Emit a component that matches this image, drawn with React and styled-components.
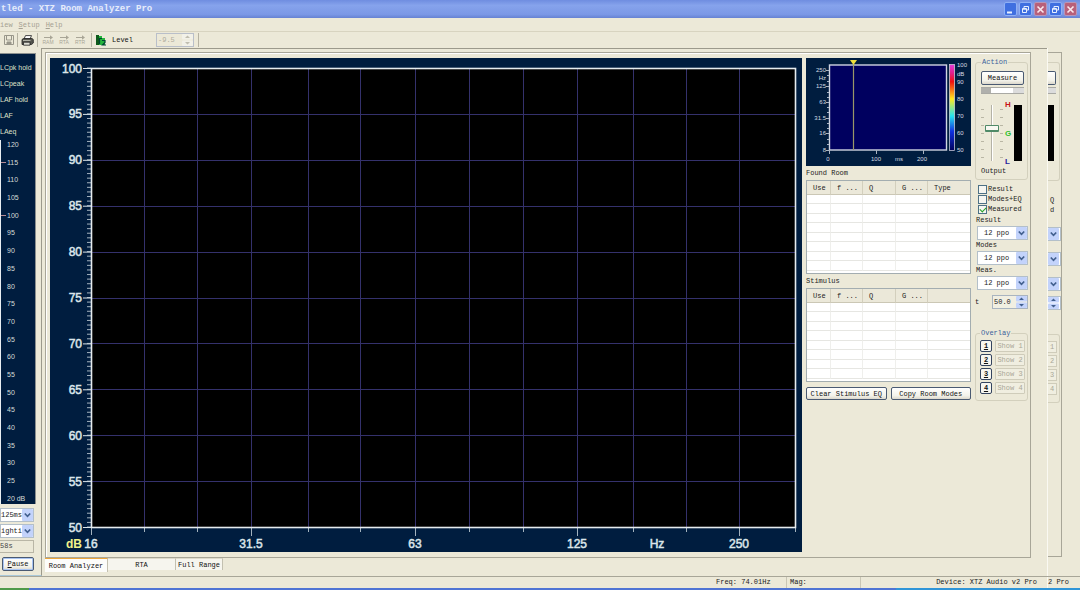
import React, { useState } from 'react';
import styled, { createGlobalStyle } from 'styled-components';

const GlobalStyle = createGlobalStyle`
  * {
    box-sizing: border-box;
  }
  body {
    margin: 0;
    background: #ece9d8;
    color: #222;
    font: 7px/10px 'Liberation Mono', monospace;
  }
  button, input, select {
    font: inherit;
    color: inherit;
    margin: 0;
  }
`

const Window = styled.div`
  display: flex;
  flex-direction: column;
  min-height: 100vh;
`

/* title bar */

const TitleBar = styled.header`
  display: flex;
  align-items: center;
  justify-content: space-between;
  height: 18px;
  padding: 0 3px 0 1px;
  background: linear-gradient(#6f8de0, #86a3ec 30%, #7b98e6 80%, #6682d2);
`

const Title = styled.h1`
  margin: 0;
  font-size: 9px;
  line-height: 16px;
  font-weight: bold;
  color: #e6ecfb;
  white-space: nowrap;
`

const WindowButtons = styled.div`
  display: flex;
  gap: 2px;
`

const WindowButton = styled.button`
  display: grid;
  place-items: center;
  width: 13px;
  height: 14px;
  padding: 0;
  border: 1px solid ${props => props.$close ? '#b795b8' : '#8fb0f5'};
  border-radius: 2px;
  background: ${props => props.$close ? '#b8607a' : '#3f6fe0'};
`

/* menu and toolbar */

const Menu = styled.nav`
  display: flex;
  gap: 6px;
  height: 14px;
  border-bottom: 1px solid #d8d4c0;
  align-items: center;

  a {
    color: #a5a192;
    text-decoration: none;
  }
  u {
    text-decoration-thickness: 1px;
  }
`

const Toolbar = styled.div`
  display: flex;
  align-items: center;
  height: 16px;
  padding-left: 2px;
`

const ToolButton = styled.button`
  display: flex;
  flex-direction: column;
  align-items: center;
  justify-content: center;
  width: ${props => props.$width || 15}px;
  height: 14px;
  padding: 0;
  border: 0;
  background: none;
  color: #a8a596;
  font: 5px/5px 'Liberation Sans', sans-serif;
`

const Separator = styled.span`
  width: 1px;
  height: 14px;
  margin: 0 ${props => props.$gap || 2}px;
  background: #b5b2a2;
`

const LevelLabel = styled.label`
  width: 44px;
  margin-left: 5px;
  color: #111;
`

/* form parts */

const PushButton = styled.button`
  flex: ${props => props.$grow || '0 0 auto'};
  height: ${props => props.$height || 14}px;
  padding: 0 2px;
  border: 1px solid #4a5a72;
  border-radius: 2px;
  background: linear-gradient(#fff, #f3f2ea 70%, #dcd8cc);
  box-shadow: ${props => props.$focus ? 'inset 0 0 0 1px #a9c4f2' : 'none'};
  color: #111;
  line-height: 10px;
  white-space: nowrap;
`

const SelectBox = styled.div`
  display: grid;
  align-items: stretch;
  height: 14px;
  margin-left: ${props => props.$indent || 0}px;
  border: 1px solid #b3bfc9;
  background: #fff;

  select {
    grid-area: 1 / 1;
    min-width: 0;
    padding: 0 0 0 ${props => props.$inset || 0}px;
    border: 0;
    appearance: none;
    background: none;
    color: #222;
  }
  svg {
    grid-area: 1 / 1;
    justify-self: end;
    pointer-events: none;
  }
`

const SpinBox = styled.span`
  display: flex;
  width: ${props => props.$width}px;
  height: 14px;
  border: 1px solid ${props => props.$off ? '#b9bfc9' : '#a9b4c0'};
  background: ${props => props.$off ? '#ece9d8' : '#f1efe2'};

  input {
    flex: 1;
    min-width: 0;
    padding: 0 0 0 1px;
    border: 0;
    background: none;
    color: ${props => props.$off ? '#b0ad9e' : '#222'};
  }
`

/* sound level column */

const Workspace = styled.div`
  display: flex;
  flex: 1;
`

const LevelColumn = styled.aside`
  display: flex;
  flex-direction: column;
  width: 42px;
  padding: 5px 5px 4px 0;
  border-right: 1px solid #9c9a8c;
  border-bottom: 1px solid #a9c8d8;
`

const LevelMeter = styled.div`
  display: flex;
  flex-direction: column;
  flex: 1;
  width: 36px;
  margin-bottom: 4px;
  padding-top: 6px;
  border: solid #8b8f8e;
  border-width: 1px 1px 0 0;
  background: #001d3f;
  color: #d5dcd8;
  font-family: 'Liberation Sans', sans-serif;
`

const MeterName = styled.div`
  line-height: 16px;
  color: #dfe0c8;
  white-space: nowrap;
`

const MeterScale = styled.ol`
  display: flex;
  flex-direction: column;
  justify-content: space-between;
  flex: 1;
  margin: 0;
  padding: 0;
  border-left: 1px solid #e8eef2;
  list-style: none;
`

const MeterMark = styled.li`
  display: flex;
  align-items: center;

  &::before {
    content: '';
    width: 5px;
    height: 1px;
    margin-right: 1px;
    background: ${props => props.$tick ? '#b58a96' : 'transparent'};
  }
`

const LevelControls = styled.div`
  display: flex;
  flex-direction: column;
  gap: 2px;
  width: 34px;
`

const Readout = styled.output`
  height: 13px;
  margin-bottom: 2px;
  border: 1px solid #b9b6a6;
  border-left: 0;
  line-height: 11px;
  color: #444;
`

const PauseRow = styled.div`
  display: grid;
  padding-left: 2px;
`

/* analyzer frame */

const Main = styled.main`
  display: flex;
  flex-direction: column;
  flex: 1;
  min-width: 0;
  padding: 3px 16px 0 3px;
  border-top: 1px solid #9c9a8c;
`

const Frame = styled.section`
  display: flex;
  flex: 1;
  align-items: flex-start;
  padding: 5px 2px 4px 4px;
  border: 1px solid #a8a698;
  box-shadow: inset 1px 1px #fff;
`

const Graph = styled.svg`
  display: block;
  flex: ${props => props.$grow ? '1 1 0' : 'none'};
  min-width: 0;
  background: #001d3f;
  font-family: 'Liberation Sans', sans-serif;
`

const RoomColumn = styled.div`
  display: flex;
  flex-direction: column;
  width: 165px;
  margin: 0 4px;
`

const Caption = styled.h2`
  margin: 0;
  font-size: 7px;
  line-height: 14px;
  font-weight: normal;
`

const TableBox = styled.div`
  height: 94px;
  border: 1px solid #a3adb0;
  background: #fff;
`

const ModeTable = styled.table`
  width: 100%;
  table-layout: fixed;
  border-collapse: separate;
  border-spacing: 0;

  th {
    height: 14px;
    padding: 0 0 0 6px;
    border-right: 1px solid #d3cfbd;
    border-bottom: 1px solid #cbc7b5;
    background: #ebe8d9;
    font-weight: normal;
    text-align: left;
    white-space: nowrap;
  }
  td {
    height: 9px;
    padding: 0;
    border-right: 1px solid #efefec;
    border-bottom: 1px solid #e6e6e2;
  }
  tr:nth-child(even) td {
    height: 10px;
  }
  th:last-child, td:last-child {
    border-right: 0;
  }
`

const ButtonRow = styled.div`
  display: flex;
  gap: 4px;
  margin-top: 5px;
`

const SideColumn = styled.div`
  flex: none;
  width: 53px;
  margin-top: -1px;
`

const Group = styled.fieldset`
  display: flex;
  flex-direction: column;
  min-width: 0;
  margin: ${props => props.$top || 0}px 0 0;
  padding: ${props => props.$pad || '4px 3px 3px 5px'};
  border: 1px solid #d3d0bd;
  border-radius: 3px;

  legend {
    margin-left: 0;
    padding: 0 1px;
    line-height: 10px;
    color: #3a5f9c;
  }
`

const Progress = styled.div`
  height: 7px;
  margin-top: 2px;
  border: solid #a9a9a4;
  border-width: 1px 0;
  background: linear-gradient(90deg, #b0b0ac 10px, #fff 10px 32px, #dcdcdc 32px);
`

const OutputRow = styled.div`
  display: flex;
  align-items: center;
  gap: 1px;
  height: 72px;
  padding-top: 6px;
`

const Ticks = styled.div`
  width: 3px;
  height: 49px;
  background: repeating-linear-gradient(#b9b6a4 0 1px, transparent 1px 8px);
`

const Fader = styled.input`
  writing-mode: vertical-lr;
  direction: rtl;
  width: 14px;
  height: 56px;
  appearance: none;
  background: linear-gradient(90deg, transparent 6px, #b4b2a6 6px 7px, #fff 7px 8px, transparent 8px);

  &::-webkit-slider-thumb {
    appearance: none;
    width: 14px;
    height: 7px;
    border: 1px solid #4f8a68;
    border-width: 1px 1px 2px;
    border-radius: 1px;
    background: #f8f8f2;
  }
`

const Zones = styled.div`
  display: flex;
  flex-direction: column;
  justify-content: space-between;
  height: 66px;
  margin-left: 1px;
  font: bold 8px/9px 'Liberation Sans', sans-serif;
`

const Zone = styled.span`
  color: ${props => props.$color};
`

const OutputMeter = styled.div`
  width: 8px;
  height: 56px;
  margin-left: auto;
  margin-right: 2px;
  background: #000;
`

const Checks = styled.div`
  padding: 4px 0 0 3px;
`

const Check = styled.label`
  display: flex;
  align-items: center;
  gap: 1px;
  height: 10px;
  white-space: nowrap;

  input {
    display: grid;
    place-items: center;
    flex: none;
    width: 9px;
    height: 9px;
    appearance: none;
    border: 1px solid #4d7186;
    background: #f6f6f1;
  }
  input:checked::after {
    content: '';
    width: 5px;
    height: 3px;
    border: solid #23a023;
    border-width: 0 0 1px 1px;
    transform: rotate(-45deg);
  }
`

const Fields = styled.div`
  margin-top: 1px;
`

const Field = styled.div`
  label {
    display: block;
    padding-left: 1px;
    line-height: 11px;
  }
`

const TimeRow = styled.div`
  display: flex;
  align-items: center;
  justify-content: space-between;
  margin-top: 5px;
`

const OverlayRow = styled.div`
  display: flex;
  gap: 3px;
  margin-bottom: 2px;
`

const OverlayButton = styled.button`
  width: 12px;
  height: 12px;
  padding: 0;
  border: 1px solid #34445f;
  border-radius: 2px;
  background: #f7f6ef;
  color: #111;
  font-weight: bold;
`

const ShowButton = styled.button`
  width: 30px;
  height: 12px;
  padding: 0;
  border: 1px solid #cfccba;
  border-radius: 1px;
  background: #f0eee0;
  white-space: nowrap;

  &:disabled {
    color: #a9a797;
  }
`

/* the strip of the second window that shows at the right */

const BackWindow = styled.div`
  display: flex;
  align-items: stretch;
  padding: 4px 18px 19px 0;
  border-left: 1px solid #faf9f2;
`

const BackFrame = styled.div`
  width: 14px;
  padding: 9px 1px 0 0;
  border: solid #a8a698;
  border-width: 1px 1px 1px 0;
`

const BackGroup = styled.div`
  height: ${props => props.$height}px;
  padding: ${props => props.$top}px 0 0;
  border: solid #d3d0bd;
  border-width: 1px 1px 1px 0;
  border-radius: 0 3px 3px 0;
`

const BackButton = styled.div`
  width: 8px;
  height: 14px;
  border: solid #4a5a72;
  border-width: 1px 1px 1px 0;
  border-radius: 0 2px 2px 0;
  background: linear-gradient(#fff, #f3f2ea 70%, #dcd8cc);
`

const BackProgress = styled.div`
  width: 8px;
  height: 7px;
  margin-top: 2px;
  border: solid #a9a9a4;
  border-width: 1px 0;
  background: #dcdcdc;
`

const BackMeter = styled.div`
  width: 6px;
  height: 56px;
  margin-top: 11px;
  background: #000;
`

const BackLabels = styled.div`
  height: 46px;
  padding: 14px 0 0 2px;
`

const BackArrows = styled.div`
  display: flex;
  flex-direction: column;
  gap: 11px;
`

const BackArrow = styled.div`
  width: 13px;
  height: 14px;
  border: 1px solid #b3bfc9;
  border-left: 0;
  background: #fff;

  svg {
    display: block;
  }
`

const BackTime = styled.div`
  margin: 5px 0 24px;
`

const BackShow = styled.div`
  width: 9px;
  height: 12px;
  margin-bottom: 2px;
  padding-left: 2px;
  border: 1px solid #cfccba;
  border-left: 0;
  background: #f0eee0;
  color: #a9a797;
`

/* page tabs and status */

const Tabs = styled.div`
  display: flex;
  height: 18px;
  align-items: flex-start;
`

const Tab = styled.button`
  width: ${props => props.$width}px;
  height: ${props => props.$active ? 14 : 12}px;
  padding: 0;
  border: solid #c3c0b0;
  border-width: 1px 1px 0 0;
  border-top-color: ${props => props.$active ? '#eba63c' : '#dedbcb'};
  background: ${props => props.$active ? '#fcfcfa' : '#f6f5ee'};
  color: #111;
  white-space: nowrap;
`

const StatusBar = styled.footer`
  display: flex;
  justify-content: flex-end;
  height: 12px;
  border-top: 1px solid #a8a698;
  line-height: 11px;
  white-space: nowrap;
`

const StatusCell = styled.span`
  width: ${props => props.$width}px;
  padding: 0 ${props => props.$end || 3}px 0 3px;
  border-right: 1px solid ${props => props.$plain ? 'transparent' : '#c9c6b5'};
  text-align: ${props => props.$end ? 'right' : 'left'};
`

const BackStatus = styled.span`
  width: 33px;
  border-left: 1px solid #faf9f2;
`

const TaskStrip = styled.div`
  height: 2px;
  background: linear-gradient(90deg, #4f9a4a 29px, #4f74d4 29px 83%, #2f95d8 83%);
`

const DropArrow = () => (
  <svg width="11" height="12" viewBox="0 0 11 12">
    <rect width="11" height="12" rx="1" fill="#c3d3fb" />
    <path d="M2.8 4.5 5.5 7.3 8.2 4.5" fill="none" stroke="#42608f" strokeWidth="1.7" />
  </svg>
)

const SpinArrows = ({ off }) => (
  <svg width="11" height="12" viewBox="0 0 11 12">
    <rect width="11" height="5.5" rx="1" fill={off ? '#f2f1e8' : '#c3d3fb'} />
    <rect y="6.5" width="11" height="5.5" rx="1" fill={off ? '#f2f1e8' : '#c3d3fb'} />
    <path d="M3 4 5.5 1.5 8 4zM3 8 5.5 10.5 8 8z" fill={off ? '#c0beb0' : '#42608f'} />
  </svg>
)

const RestoreIcon = () => (
  <svg width="9" height="9" viewBox="0 0 9 9" fill="none" stroke="#e8f0ff">
    <path d="M3 3V1.5h4.5V5H6" />
    <path d="M1.5 3.5h4v4h-4zM1.5 4.2h4" />
  </svg>
)

const CloseIcon = () => (
  <svg width="9" height="9" viewBox="0 0 9 9">
    <path d="M1.5 1.5 7.5 7.5M7.5 1.5 1.5 7.5" stroke="#fbe9ee" strokeWidth="1.6" />
  </svg>
)

const Arrow = () => (
  <svg width="9" height="5" viewBox="0 0 9 5">
    <path d="M0 2h6V.3L9 2.5 6 4.7V3H0z" fill="#a8a596" />
  </svg>
)

const dbMarks = [100, 95, 90, 85, 80, 75, 70, 65, 60, 55, 50];
const gridX = [94, 147, 201, 258, 310, 365, 419, 473, 527, 583, 636, 689];
const freqMarks = [[41, '16'], [201, '31.5'], [365, '63'], [527, '125'], [607, 'Hz'], [689, '250']];

const RoomGraph = () => {
  var minor = [];
  for (var i = 0; i <= 100; i++) {
    minor.push(10 + i * 4.59);
  }
  return (
    <Graph $grow viewBox="0 0 752 494" role="img" aria-label="Room response">
      <rect x="41" y="10" width="704" height="459" fill="#000" />
      <g stroke="#34316c">
        {gridX.map(x => <path key={x} d={`M${x + 0.5} 11V469`} />)}
        {dbMarks.slice(1, -1).map((db, i) => <path key={db} d={`M42 ${Math.round(55.9 + i * 45.9) + 0.5}H745`} />)}
      </g>
      <g stroke="#a3b2be">
        {minor.map(y => <path key={y} d={`M37 ${y}H41`} />)}
        {gridX.map((x, i) => <path key={x} d={`M${x + 0.5} 469v${i % 3 === 2 ? 9 : 5}`} />)}
        <path d="M41.5 469v8M745.5 469v5" />
      </g>
      <rect x="41.5" y="10.5" width="704" height="459" fill="none" stroke="#e6ecef" strokeWidth="1.6" />
      <g fill="#dbe5ea" stroke="#dbe5ea" strokeWidth="0.5" fontSize="12">
        {dbMarks.map((db, i) => (
          <g key={db}>
            <path d={`M33 ${10.5 + i * 45.9}H41`} strokeWidth="1" />
            <text x="32" y={14.5 + i * 45.9} textAnchor="end">{db}</text>
          </g>
        ))}
        {freqMarks.map(([x, text]) => <text key={text} x={x} y="490" textAnchor="middle">{text}</text>)}
      </g>
      <text x="24" y="490" textAnchor="middle" fontSize="12" fontWeight="bold" fill="#f1f28a">dB</text>
    </Graph>
  )
}

const waterfallLeft = [[12, '250'], [20, 'Hz'], [28, '125'], [44, '63'], [60, '31.5'], [75, '16'], [92, '8']];
const waterfallRight = [[7, '100'], [16, 'dB'], [24, '90'], [41, '80'], [58, '70'], [75, '60'], [92, '50']];
const waterfallBottom = [[22, '0'], [70, '100'], [93, 'ms'], [116, '200']];

const Waterfall = () => (
  <Graph width="165" height="108" viewBox="0 0 165 108" role="img" aria-label="Decay">
    <defs>
      <linearGradient id="heat" x1="0" y1="0" x2="0" y2="1">
        <stop offset="0" stopColor="#e23bd8" />
        <stop offset="0.1" stopColor="#e01f8c" />
        <stop offset="0.2" stopColor="#f01010" />
        <stop offset="0.4" stopColor="#ffe920" />
        <stop offset="0.6" stopColor="#25e4f0" />
        <stop offset="0.78" stopColor="#1030e0" />
        <stop offset="1" stopColor="#00005c" />
      </linearGradient>
    </defs>
    <rect x="23.5" y="7" width="117" height="85" fill="#00005f" stroke="#cfd4e2" strokeWidth="1.4" />
    <g stroke="#a9b4c2">
      {waterfallLeft.filter(m => m[1] !== 'Hz').map(([y]) => <path key={y} d={`M20 ${y + 0.5}h3`} />)}
      {[17, 23, 34, 39, 49, 54, 65, 70, 81, 86].map(y => <path key={y} d={`M21 ${y + 0.5}h2`} />)}
      <path d="M23.5 92v4M70.5 92v4M117.5 92v4" />
    </g>
    <path d="M47.500 6V92" stroke="#9a9768" strokeWidth="1.2" />
    <path d="M44 2h7l-3.500 5z" fill="#f0e13c" />
    <rect x="143.5" y="6.500" width="5" height="86" fill="url(#heat)" stroke="#dcdce4" strokeWidth="0.7" />
    <g fill="#d4dce2" fontSize="6">
      {waterfallLeft.map(([y, text]) => <text key={text} x="20" y={y + 2} textAnchor="end">{text}</text>)}
      {waterfallRight.map(([y, text]) => <text key={text} x="151" y={y + 2}>{text}</text>)}
      {waterfallBottom.map(([x, text]) => <text key={text} x={x} y="103" textAnchor="middle">{text}</text>)}
    </g>
  </Graph>
)

const columnWidths = [24, 32, 33, 32, 42];

const Modes = ({ caption, heads }) => (
  <section>
    <Caption>{caption}</Caption>
    <TableBox>
      <ModeTable aria-label={caption}>
        <colgroup>
          {columnWidths.map((w, i) => <col key={i} width={w} />)}
        </colgroup>
        <thead>
          <tr>{heads.map((h, i) => <th key={i}>{h}</th>)}</tr>
        </thead>
        <tbody>
          {[1, 2, 3, 4, 5, 6, 7, 8].map(row => (
            <tr key={row}>{heads.map((h, i) => <td key={i} />)}</tr>
          ))}
        </tbody>
      </ModeTable>
    </TableBox>
  </section>
)

const Controls = () => {
  const [gain, setGain] = useState(60);
  return (
    <SideColumn>
      <Group>
        <legend>Action</legend>
        <PushButton>Measure</PushButton>
        <Progress />
        <OutputRow>
          <Ticks />
          <Fader
            type="range"
            id="output"
            value={gain}
            onChange={e => setGain(Number(e.target.value))}
          />
          <Ticks />
          <Zones>
            <Zone $color="#c8141c">H</Zone>
            <Zone $color="#2fc02f">G</Zone>
            <Zone $color="#22229c">L</Zone>
          </Zones>
          <OutputMeter />
        </OutputRow>
        <label htmlFor="output">Output</label>
      </Group>
      <Checks>
        <Check><input type="checkbox" />Result</Check>
        <Check><input type="checkbox" />Modes+EQ</Check>
        <Check><input type="checkbox" defaultChecked />Measured</Check>
      </Checks>
      <Fields>
        {['Result', 'Modes', 'Meas.'].map(name => (
          <Field key={name}>
            <label htmlFor={'res-' + name}>{name}</label>
            <SelectBox $indent={2} $inset={6}>
              <select id={'res-' + name}><option>12 ppo</option></select>
              <DropArrow />
            </SelectBox>
          </Field>
        ))}
      </Fields>
      <TimeRow>
        <label htmlFor="time">t</label>
        <SpinBox $width={36}>
          <input id="time" defaultValue="50.0" />
          <SpinArrows />
        </SpinBox>
      </TimeRow>
      <Group $top={19} $pad="2px 2px 4px 4px">
        <legend>Overlay</legend>
        {[1, 2, 3, 4].map(n => (
          <OverlayRow key={n}>
            <OverlayButton><u>{n}</u></OverlayButton>
            <ShowButton disabled>Show {n}</ShowButton>
          </OverlayRow>
        ))}
      </Group>
    </SideColumn>
  )
}

const BackControls = () => (
  <BackFrame>
    <BackGroup $height={119} $top={8}>
      <BackButton />
      <BackProgress />
      <BackMeter />
    </BackGroup>
    <BackLabels>
      <div>Q</div>
      <div>d</div>
    </BackLabels>
    <BackArrows>
      <BackArrow><DropArrow /></BackArrow>
      <BackArrow><DropArrow /></BackArrow>
      <BackArrow><DropArrow /></BackArrow>
    </BackArrows>
    <BackTime>
      <BackArrow><SpinArrows /></BackArrow>
    </BackTime>
    <BackGroup $height={69} $top={6}>
      {[1, 2, 3, 4].map(n => <BackShow key={n}>{n}</BackShow>)}
    </BackGroup>
  </BackFrame>
)

const levels = [];
for (let db = 120; db >= 20; db -= 5) {
  levels.push(db);
}

const Levels = () => (
  <LevelColumn>
    <LevelMeter>
      {['LCpk hold', 'LCpeak', 'LAF hold', 'LAF', 'LAeq'].map(name => <MeterName key={name}>{name}</MeterName>)}
      <MeterScale>
        {levels.map(db => (
          <MeterMark key={db} $tick={db === 115 || db === 100}>{db === 20 ? '20 dB' : db}</MeterMark>
        ))}
      </MeterScale>
    </LevelMeter>
    <LevelControls>
      <SelectBox>
        <select aria-label="Time"><option>125ms</option></select>
        <DropArrow />
      </SelectBox>
      <SelectBox>
        <select aria-label="Weighting"><option>ighti</option></select>
        <DropArrow />
      </SelectBox>
      <Readout>58s</Readout>
      <PauseRow>
        <PushButton $focus><u>P</u>ause</PushButton>
      </PauseRow>
    </LevelControls>
  </LevelColumn>
)

const tabs = [['Room Analyzer', 63], ['RTA', 68], ['Full Range', 47]];

export default function App() {
  const [tab, setTab] = useState('Room Analyzer');

  return (
    <Window>
      <GlobalStyle />
      <TitleBar>
        <Title>tled - XTZ Room Analyzer Pro</Title>
        <WindowButtons>
          <WindowButton aria-label="Minimize">
            <svg width="9" height="9" viewBox="0 0 9 9"><path d="M1 6.5h5v2H1z" fill="#e8f0ff" /></svg>
          </WindowButton>
          <WindowButton aria-label="Restore"><RestoreIcon /></WindowButton>
          <WindowButton $close aria-label="Close"><CloseIcon /></WindowButton>
          <WindowButton aria-label="Restore"><RestoreIcon /></WindowButton>
          <WindowButton $close aria-label="Close"><CloseIcon /></WindowButton>
        </WindowButtons>
      </TitleBar>
      <Menu>
        <a href="#view">iew</a>
        <a href="#setup"><u>S</u>etup</a>
        <a href="#help"><u>H</u>elp</a>
      </Menu>
      <Toolbar>
        <ToolButton aria-label="Save" $width={13}>
          <svg width="10" height="10" viewBox="0 0 10 10" fill="none" stroke="#98968a">
            <path d="M.5.5h9v9h-9z" />
            <path d="M2.5 1v4h5V1" />
            <path d="M3 7h4v2.5H3z" fill="#98968a" />
          </svg>
        </ToolButton>
        <Separator />
        <ToolButton aria-label="Print">
          <svg width="13" height="11" viewBox="0 0 13 11">
            <path d="M4.5.6h6L9 4H3z" fill="#fff" stroke="#333" strokeWidth="0.9" />
            <path d="M1 4.5 2.5 3.5h8.5L12.3 4.5V8L10.5 9.5H1z" fill="#55564f" stroke="#222" strokeWidth="0.8" />
            <path d="M2.5 7.2h6.5v3H2.5z" fill="#deded4" stroke="#222" strokeWidth="0.8" />
            <path d="M2 5.5h7.5" stroke="#d8d8cc" strokeWidth="0.7" />
          </svg>
        </ToolButton>
        <Separator />
        {['RAM', 'RTA', 'RTR'].map(name => (
          <ToolButton key={name} $width={16}><Arrow />{name}</ToolButton>
        ))}
        <Separator $gap={3} />
        <svg width="12" height="12" viewBox="0 0 12 12">
          <path d="M1 1h3v10H1z" fill="#0d5a1b" />
          <path d="M4 2h3v2h3v7H4z" fill="#25b53c" />
          <path d="M4.5 10V4M4.5 4.5H7M7 6.5h3v2L7.500 11h3.500" fill="none" stroke="#043" strokeWidth="1.2" />
        </svg>
        <LevelLabel htmlFor="level">Level</LevelLabel>
        <SpinBox $width={38} $off>
          <input id="level" defaultValue="-9.5" disabled />
          <SpinArrows off />
        </SpinBox>
        <Separator $gap={4} />
      </Toolbar>
      <Workspace>
        <Levels />
        <Main>
          <Frame>
            <RoomGraph />
            <RoomColumn>
              <Waterfall />
              <Modes caption="Found Room" heads={['Use', 'f ...', 'Q', 'G ...', 'Type']} />
              <Modes caption="Stimulus" heads={['Use', 'f ...', 'Q', 'G ...', '']} />
              <ButtonRow>
                <PushButton $grow="1 1 0" $height={13}>Clear Stimulus EQ</PushButton>
                <PushButton $grow="1 1 0" $height={13}>Copy Room Modes</PushButton>
              </ButtonRow>
            </RoomColumn>
            <Controls />
          </Frame>
          <Tabs role="tablist">
            {tabs.map(([name, width]) => (
              <Tab
                key={name}
                role="tab"
                aria-selected={tab === name}
                $active={tab === name}
                $width={width}
                onClick={() => setTab(name)}
              >
                {name}
              </Tab>
            ))}
          </Tabs>
        </Main>
        <BackWindow>
          <BackControls />
        </BackWindow>
      </Workspace>
      <StatusBar>
        <StatusCell $width={74}>Freq: 74.01Hz</StatusCell>
        <StatusCell $width={74}>Mag:</StatusCell>
        <StatusCell $width={186} $end={9} $plain>Device: XTZ Audio v2 Pro</StatusCell>
        <BackStatus>2 Pro</BackStatus>
      </StatusBar>
      <TaskStrip />
    </Window>
  );
}
